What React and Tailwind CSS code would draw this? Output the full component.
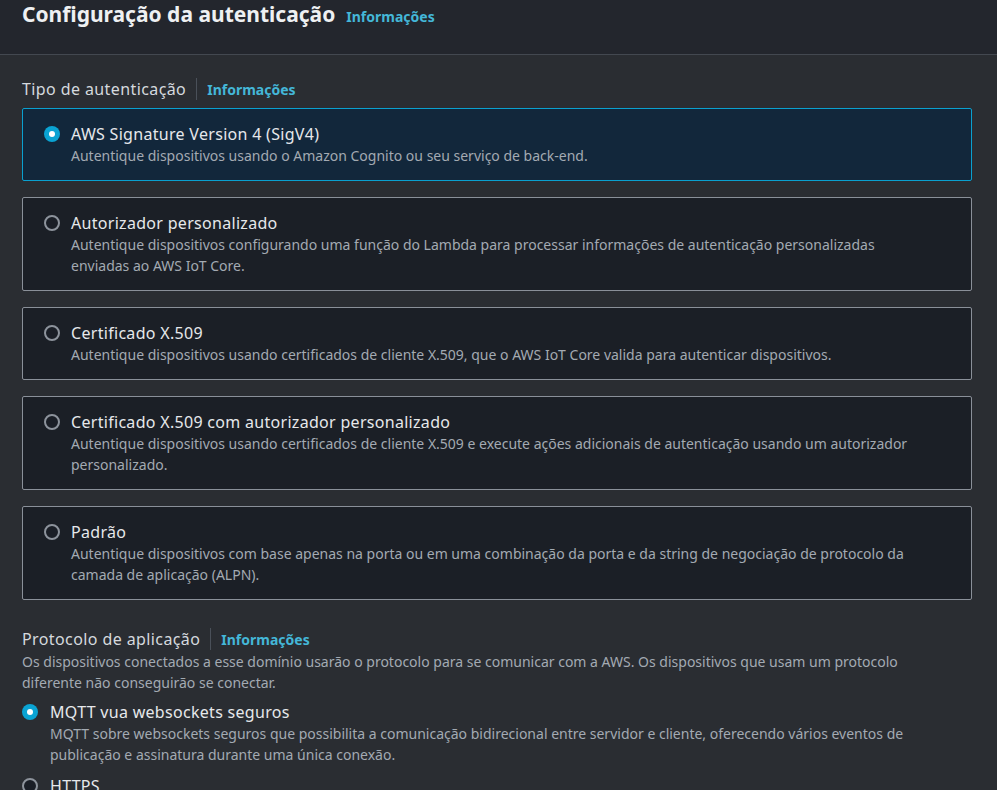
import React, { useState } from "react";

const authTypes = [
  {
    id: "sigv4",
    title: "AWS Signature Version 4 (SigV4)",
    description: "Autentique dispositivos usando o Amazon Cognito ou seu serviço de back-end.",
  },
  {
    id: "custom",
    title: "Autorizador personalizado",
    description:
      "Autentique dispositivos configurando uma função do Lambda para processar informações de autenticação personalizadas enviadas ao AWS IoT Core.",
  },
  {
    id: "x509",
    title: "Certificado X.509",
    description:
      "Autentique dispositivos usando certificados de cliente X.509, que o AWS IoT Core valida para autenticar dispositivos.",
  },
  {
    id: "x509-custom",
    title: "Certificado X.509 com autorizador personalizado",
    description:
      "Autentique dispositivos usando certificados de cliente X.509 e execute ações adicionais de autenticação usando um autorizador personalizado.",
  },
  {
    id: "default",
    title: "Padrão",
    description:
      "Autentique dispositivos com base apenas na porta ou em uma combinação da porta e da string de negociação de protocolo da camada de aplicação (ALPN).",
  },
];

const protocols = [
  {
    id: "mqtt-wss",
    title: "MQTT vua websockets seguros",
    description:
      "MQTT sobre websockets seguros que possibilita a comunicação bidirecional entre servidor e cliente, oferecendo vários eventos de publicação e assinatura durante uma única conexão.",
  },
  {
    id: "https",
    title: "HTTPS",
    description: "",
  },
];

function Radio({ checked }) {
  return checked ? (
    <span className="mt-[3px] flex h-4 w-4 shrink-0 items-center justify-center rounded-full bg-[#0aa3d3]">
      <span className="h-[6px] w-[6px] rounded-full bg-white" />
    </span>
  ) : (
    <span className="mt-[3px] h-4 w-4 shrink-0 rounded-full border-2 border-[#8d939c] bg-[#1a1e26]" />
  );
}

function InfoLink() {
  return (
    <a className="text-[14px] font-bold text-[#44b7d8]" href="#">
      Informações
    </a>
  );
}

function FieldLabel({ children }) {
  return (
    <div className="flex items-center">
      <span className="text-[16px] leading-[22px] tracking-[0.4px] text-[#d5d9de]">{children}</span>
      <span className="mx-[10px] h-[22px] w-px bg-[#4a5059]" />
      <InfoLink />
    </div>
  );
}

export default function App() {
  const [auth, setAuth] = useState("sigv4");
  const [protocol, setProtocol] = useState("mqtt-wss");

  return (
    <div
      className="min-h-[790px] bg-[#2a2d32] text-[#d5d9de]"
      style={{ fontFamily: '"Noto Sans", "Open Sans", sans-serif' }}
    >
      {/* Page header */}
      <div className="flex h-[55px] items-baseline gap-[11px] border-b border-[#434850] bg-[#23262d] px-[22px] pt-[2px]">
        <h1 className="text-[21px] font-bold leading-[24px] text-[#eef0f2]">Configuração da autenticação</h1>
        <InfoLink />
      </div>

      <div className="pl-[22px] pr-[25px] pt-[23px]">
        {/* Authentication type */}
        <FieldLabel>Tipo de autenticação</FieldLabel>
        <div className="mt-[8px] flex flex-col gap-[16px]">
          {authTypes.map((item) => {
            const selected = auth === item.id;
            return (
              <label
                key={item.id}
                onClick={() => setAuth(item.id)}
                className={`flex cursor-pointer gap-[11px] rounded-[2px] border py-[14px] pl-[21px] pr-[20px] ${
                  selected ? "border-[#0aa0cf] bg-[#12273b]" : "border-[#8a9099] bg-[#1b1f26]"
                }`}
              >
                <Radio checked={selected} />
                <div>
                  <div className="text-[16px] leading-[22px] tracking-[0.3px] text-[#e6e8eb]">{item.title}</div>
                  <div className="max-w-[850px] text-[14px] leading-[21px] text-[#a3aab2]">{item.description}</div>
                </div>
              </label>
            );
          })}
        </div>

        {/* Application protocol */}
        <div className="mt-[28px]">
          <FieldLabel>Protocolo de aplicação</FieldLabel>
          <p className="mt-[1px] max-w-[900px] text-[14px] leading-[21px] text-[#a3aab2]">
            Os dispositivos conectados a esse domínio usarão o protocolo para se comunicar com a AWS. Os dispositivos que
            usam um protocolo diferente não conseguirão se conectar.
          </p>
          <div className="mt-[8px] flex flex-col gap-[10px]">
            {protocols.map((item) => {
              const selected = protocol === item.id;
              return (
                <label key={item.id} onClick={() => setProtocol(item.id)} className="flex cursor-pointer gap-[12px]">
                  <Radio checked={selected} />
                  <div>
                    <div className="text-[16px] leading-[22px] tracking-[0.3px] text-[#e6e8eb]">{item.title}</div>
                    {item.description && (
                      <div className="text-[14px] leading-[21px] text-[#a3aab2]">{item.description}</div>
                    )}
                  </div>
                </label>
              );
            })}
          </div>
        </div>
      </div>
    </div>
  );
}
